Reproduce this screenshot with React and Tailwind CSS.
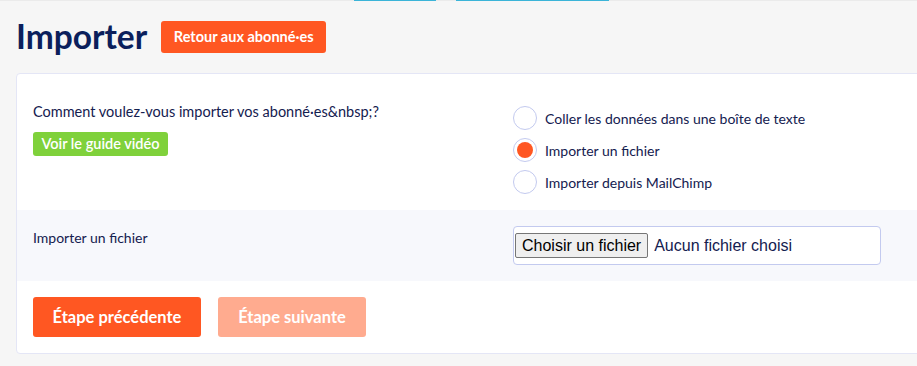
import React from "react";

function Radio({ checked, label }) {
  return (
    <label className="flex items-center gap-2 h-6">
      <span className="w-6 h-6 rounded-full border border-[#c3caef] bg-white flex items-center justify-center shrink-0">
        {checked && <span className="w-4 h-4 rounded-full bg-[#ff5722]" />}
      </span>
      <span className="text-[14px] text-[#14204f]">{label}</span>
    </label>
  );
}

export default function App() {
  return (
    <div className="h-[366px] w-[917px] overflow-hidden bg-[#f6f6f6] font-['Lato',sans-serif]">
      <div className="flex h-px bg-[#ebebeb]">
        <div className="w-[354px]" />
        <div className="w-[82px] bg-[#3bb4d8]" />
        <div className="w-[20px]" />
        <div className="w-[153px] bg-[#3bb4d8]" />
      </div>
      <div className="flex items-center gap-[14px] pl-[16px] pt-[19px] h-[53px]">
        <h1 className="text-[33.5px] font-bold text-[#0b1f5c] leading-none">Importer</h1>
        <button className="w-[165px] h-[32px] rounded-[3px] bg-[#ff5722] text-white text-[14.5px] font-bold">
          Retour aux abonné·es
        </button>
      </div>
      <div className="ml-4 mt-[19px] w-[994px] bg-white border border-[#e4e6f6] rounded-[4px]">
        <div className="flex px-4 pt-[28px] pb-[16px]">
          <div className="w-[480px] flex flex-col items-start">
            <p className="text-[14.5px] leading-5 text-[#14204f]">Comment voulez-vous importer vos abonné·es&amp;nbsp;?</p>
            <button className="mt-[10px] h-6 w-[135px] rounded-[3px] bg-[#7fd13b] text-white text-[14.5px] font-semibold leading-none">
              Voir le guide vidéo
            </button>
          </div>
          <div className="flex flex-col gap-2 mt-1">
            <Radio label="Coller les données dans une boîte de texte" />
            <Radio checked label="Importer un fichier" />
            <Radio label="Importer depuis MailChimp" />
          </div>
        </div>
        <div className="flex px-4 py-4 bg-[#f7f8fc]">
          <div className="w-[480px] pt-[2px] text-[14px] leading-5 text-[#14204f]">Importer un fichier</div>
          <div className="w-[368px] h-[39px] rounded-[4px] border border-[#c3caef] bg-white flex items-center pl-px">
            <span className="h-[25px] px-[6px] flex items-center border border-[#767676] rounded-[2px] bg-[#efefef] text-[16px] text-black font-['Liberation_Sans',sans-serif]">
              Choisir un fichier
            </span>
            <span className="ml-[6px] text-[16px] text-[#14204f] font-['Liberation_Sans',sans-serif]">Aucun fichier choisi</span>
          </div>
        </div>
        <div className="flex gap-[17px] px-4 pt-[16px] pb-[16px]">
          <button className="w-[168px] h-10 rounded-[3px] bg-[#ff5722] text-white text-[16.5px] font-bold">Étape précédente</button>
          <button className="w-[148px] h-10 rounded-[3px] bg-[#ffab8f] text-white text-[16.5px] font-bold">Étape suivante</button>
        </div>
      </div>
    </div>
  );
}
